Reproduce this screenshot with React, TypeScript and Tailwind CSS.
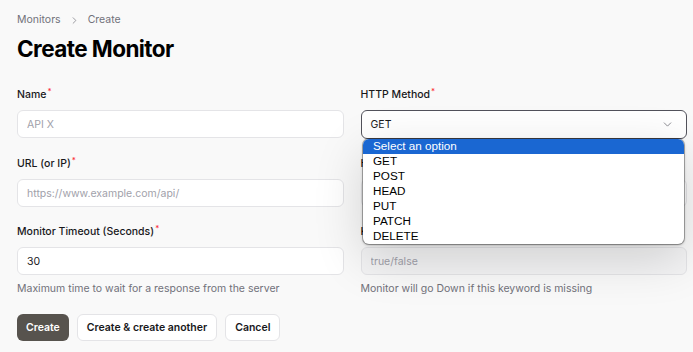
import { ChevronDown, ChevronRight } from 'lucide-react'

const methods = ['GET', 'POST', 'HEAD', 'PUT', 'PATCH', 'DELETE']

function Label({ children }: { children: React.ReactNode }) {
  return (
    <label className="block text-[10.5px] leading-4 font-medium text-[#18181b]">
      {children}
      <sup className="text-red-500 ml-px">*</sup>
    </label>
  )
}

function Field({
  label,
  placeholder,
  value,
  hint,
  muted,
}: {
  label: string
  placeholder?: string
  value?: string
  hint?: string
  muted?: boolean
}) {
  return (
    <div>
      <Label>{label}</Label>
      <input
        readOnly
        placeholder={placeholder}
        value={value ?? ''}
        className={`mt-[7px] block w-full h-[28px] px-[9px] text-[10.5px] rounded-md border border-[#e4e4e7] outline-none text-[#18181b] placeholder:text-[#a1a1aa] ${muted ? 'bg-[#f4f4f5]' : 'bg-white'}`}
      />
      {hint && <p className="mt-[6px] text-[10.5px] leading-4 text-[#71717a]">{hint}</p>}
    </div>
  )
}

export default function App() {
  return (
    <div className="min-h-[352px] bg-[#f9f9f9] font-['Inter',sans-serif] pl-[17px] pr-[6px] pt-[11px] relative overflow-hidden">
      {/* BREADCRUMB */}
      <nav className="flex items-center gap-[8px] text-[10.5px] leading-[18px] text-[#71717a]">
        <span>Monitors</span>
        <ChevronRight size={11} strokeWidth={1.5} />
        <span>Create</span>
      </nav>
      <h1 className="mt-[4px] text-[22.5px] leading-8 font-bold tracking-tight text-black">
        Create Monitor
      </h1>

      {/* FORM */}
      <div className="mt-[22px] grid grid-cols-2 gap-x-[17px] gap-y-[17px]">
        <Field label="Name" placeholder="API X" />
        <div>
          <Label>HTTP Method</Label>
          <div className="mt-[7px] flex items-center justify-between h-[29px] pl-[9px] pr-[12px] rounded-md border-[1.5px] border-[#52525b] bg-white text-[10.5px] text-[#18181b]">
            <span>GET</span>
            <ChevronDown size={13} strokeWidth={1.5} className="text-[#71717a]" />
          </div>
        </div>

        <Field label="URL (or IP)" placeholder="https://www.example.com/api/" />
        <Field label="Headers" placeholder="" />

        <Field
          label="Monitor Timeout (Seconds)"
          value="30"
          hint="Maximum time to wait for a response from the server"
        />
        <Field
          label="Keyword"
          placeholder="true/false"
          hint="Monitor will go Down if this keyword is missing"
          muted
        />
      </div>

      {/* ACTIONS */}
      <div className="mt-[17px] flex gap-2">
        <button className="h-[27px] px-[9px] rounded-md bg-[#57534e] text-white text-[10.5px] font-semibold">
          Create
        </button>
        <button className="h-[27px] px-[9px] rounded-md bg-white border border-[#e4e4e7] text-[10.5px] font-semibold text-[#18181b]">
          Create &amp; create another
        </button>
        <button className="h-[27px] px-[9px] rounded-md bg-white border border-[#e4e4e7] text-[10.5px] font-semibold text-[#18181b]">
          Cancel
        </button>
      </div>

      {/* OPEN SELECT MENU */}
      <ul className="absolute left-[363px] top-[139px] w-[321px] bg-white rounded-md overflow-hidden shadow-[0_0_0_1px_rgba(0,0,0,0.28),0_1px_3px_rgba(0,0,0,0.3),0_14px_50px_rgba(0,0,0,0.16)] font-['Liberation_Sans',Arial,sans-serif] text-[11.7px] leading-[13px] text-black">
        <li className="h-[15px] px-[10px] bg-[#1a67d2] text-white">Select an option</li>
        {methods.map((m) => (
          <li key={m} className="h-[15px] px-[10px]">
            {m}
          </li>
        ))}
      </ul>
    </div>
  )
}
